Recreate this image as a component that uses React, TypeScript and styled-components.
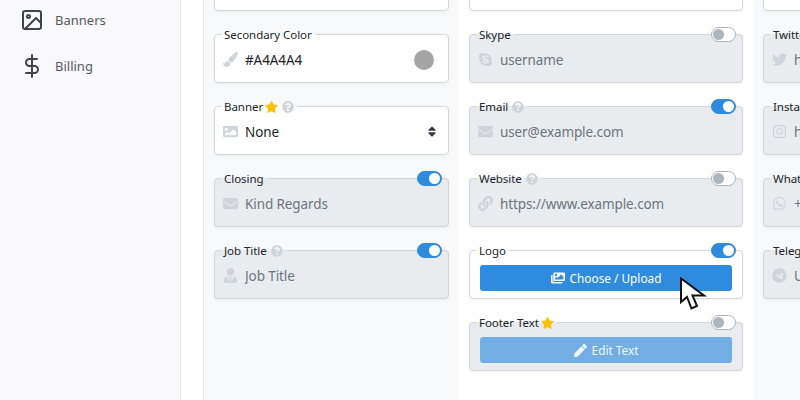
import React from "react";
import styled, { createGlobalStyle } from "styled-components";
import {
  FaPaintBrush, FaImage, FaEnvelope, FaUserTie, FaSkype, FaLink, FaImages, FaPen, FaStar,
  FaQuestionCircle, FaTwitter, FaInstagram, FaWhatsapp, FaTelegram, FaSort,
} from "react-icons/fa";
import { FiImage, FiDollarSign } from "react-icons/fi";

const Global = createGlobalStyle`
  html, body { margin: 0; padding: 0; background: #fff; }
  body { font-family: "Noto Sans", "Open Sans", "Liberation Sans", sans-serif; }
`;

const Page = styled.div`
  display: flex;
  width: 800px;
  height: 400px;
  overflow: hidden;
  background: #fff;
`;
const Sidebar = styled.nav`
  flex: 0 0 180px;
  background: #f9f9fb;
  border-right: 1px solid #dfe1e5;
  display: flex;
  flex-direction: column;
`;
const NavList = styled.div`
  margin-top: -3px;
  padding-left: 20px;
  display: flex;
  flex-direction: column;
`;
const NavItem = styled.div`
  height: 46px;
  display: flex;
  align-items: center;
  gap: 11px;
  font-size: 13px;
  color: #55595f;
  svg { flex: 0 0 24px; color: #404348; }
`;
const Gutter = styled.div`
  flex: 0 0 22px;
  border-right: 1px solid #dfe1e5;
`;
const Column = styled.section<{ $w: number; $shade?: boolean }>`
  flex: 0 0 ${(p) => p.$w}px;
  padding: 0 10px;
  box-sizing: border-box;
  height: 400px;
  background: ${(p) => (p.$shade ? "#f8f9fb" : "#fff")};
`;
const Stack = styled.div`
  margin-top: -46px;
  display: flex;
  flex-direction: column;
  gap: 15px;
`;
const Card = styled.fieldset<{ $off?: boolean }>`
  position: relative;
  margin: 0;
  padding: 0;
  min-width: 0;
  border: 1px solid #d3d6da;
  border-radius: 4px;
  background: ${(p) => (p.$off ? "#e9ecef" : "#fff")};
  box-shadow: 0 1px 3px rgba(0, 0, 0, 0.06);
`;
const Legend = styled.legend`
  margin-left: 6px;
  padding: 0 3px;
  height: 17px;
  line-height: 17px;
  font-size: 11.5px;
  letter-spacing: -0.05px;
  color: #212529;
  display: flex;
  align-items: center;
  gap: 4px;
  white-space: nowrap;
`;
const Help = styled(FaQuestionCircle)`
  color: #ced4da;
  width: 12px;
  height: 12px;
`;
const Star = styled(FaStar)`
  color: #ffc107;
  width: 13px;
  height: 12px;
  margin-left: -2px;
`;
const Toggle = styled.span<{ $on?: boolean }>`
  position: absolute;
  top: -16px;
  right: 6px;
  width: 25px;
  height: 15px;
  box-sizing: border-box;
  border-radius: 8px;
  background: ${(p) => (p.$on ? "#2f8bdd" : "#fff")};
  border: 1px solid ${(p) => (p.$on ? "#2f8bdd" : "#adb5bd")};
  &::after {
    content: "";
    position: absolute;
    top: 1px;
    left: ${(p) => (p.$on ? "11px" : "1px")};
    width: 11px;
    height: 11px;
    border-radius: 50%;
    background: ${(p) => (p.$on ? "#fff" : "#adb5bd")};
  }
`;
const Row = styled.div`
  padding: 0 9px 6px 8px;
  height: 33px;
  display: flex;
  align-items: center;
  gap: 7px;
`;
const FieldIcon = styled.span`
  flex: 0 0 15px;
  display: flex;
  justify-content: center;
  color: #ced4da;
  font-size: 15px;
`;
const Value = styled.span<{ $off?: boolean }>`
  flex: 1;
  font-size: 13.5px;
  letter-spacing: -0.1px;
  color: ${(p) => (p.$off ? "#6c757d" : "#212529")};
  white-space: nowrap;
  overflow: hidden;
`;
const Swatch = styled.span`
  width: 20px;
  height: 20px;
  border-radius: 50%;
  background: #a4a4a4;
  margin-right: 5px;
`;
const SortIcon = styled(FaSort)`
  color: #343a40;
  width: 10px;
  height: 13px;
  margin-right: 2px;
`;
const ButtonWrap = styled.div`
  padding: 6px 10px 7px;
`;
const Action = styled.div<{ $off?: boolean }>`
  height: 26px;
  border-radius: 3px;
  background: ${(p) => (p.$off ? "#72aee3" : "#2f8bdd")};
  color: ${(p) => (p.$off ? "#eef5fc" : "#fff")};
  font-size: 11.8px;
  display: flex;
  align-items: center;
  justify-content: center;
  gap: 5px;
`;
const Cursor = styled.svg`
  position: absolute;
  left: 679px;
  top: 277px;
`;

type FieldProps = {
  label: string;
  icon: React.ReactNode;
  value: string;
  on?: boolean;
  off?: boolean;
  help?: boolean;
};

const Field = ({ label, icon, value, on, off, help }: FieldProps) => (
  <Card $off={off}>
    <Legend>
      {label}
      {help && <Help />}
    </Legend>
    {(on || off) && <Toggle $on={on} />}
    <Row>
      <FieldIcon>{icon}</FieldIcon>
      <Value $off={off}>{value}</Value>
    </Row>
  </Card>
);

export default function App() {
  return (
    <Page>
      <Global />
      <Sidebar>
        <NavList>
          <NavItem><FiImage size={24} />Banners</NavItem>
          <NavItem><FiDollarSign size={24} />Billing</NavItem>
        </NavList>
      </Sidebar>
      <Gutter />
      <Column $w={255} $shade>
        <Stack>
          <Field label="Primary Color" icon={<FaPaintBrush />} value="#2E8BDC" />
          <Card>
            <Legend>Secondary Color</Legend>
            <Row>
              <FieldIcon><FaPaintBrush /></FieldIcon>
              <Value>#A4A4A4</Value>
              <Swatch />
            </Row>
          </Card>
          <Card>
            <Legend>Banner <Star /><Help /></Legend>
            <Row>
              <FieldIcon><FaImage /></FieldIcon>
              <Value>None</Value>
              <SortIcon />
            </Row>
          </Card>
          <Field label="Closing" icon={<FaEnvelope />} value="Kind Regards" on off />
          <Field label="Job Title" help icon={<FaUserTie />} value="Job Title" on off />
        </Stack>
      </Column>
      <Column $w={294}>
        <Stack>
          <Field label="Phone" icon={<FaLink />} value="" />
          <Field label="Skype" icon={<FaSkype />} value="username" off />
          <Field label="Email" help icon={<FaEnvelope />} value="user@example.com" on off />
          <Field label="Website" help icon={<FaLink />} value="https://www.example.com" off />
          <Card>
            <Legend>Logo</Legend>
            <Toggle $on />
            <ButtonWrap>
              <Action><FaImages size={14} />Choose / Upload</Action>
            </ButtonWrap>
          </Card>
          <Card $off>
            <Legend>Footer Text <Star /></Legend>
            <Toggle />
            <ButtonWrap>
              <Action $off><FaPen size={13} />Edit Text</Action>
            </ButtonWrap>
          </Card>
        </Stack>
      </Column>
      <Column $w={294} $shade>
        <Stack>
          <Field label="Facebook" icon={<FaLink />} value="" />
          <Field label="Twitter" icon={<FaTwitter />} value="https://twitter.com" off />
          <Field label="Instagram" icon={<FaInstagram />} value="https://instagram.com" off />
          <Field label="WhatsApp" icon={<FaWhatsapp />} value="+1 555 0100" off />
          <Field label="Telegram" icon={<FaTelegram />} value="Username" off />
        </Stack>
      </Column>
      <Cursor width="28" height="34" viewBox="0 0 28 34">
        <path d="M2 1.5 L2 25 L8 20 L12.5 31.5 L18 29 L13.5 18.5 L25 18.5 Z" fill="#fff" stroke="#111" strokeWidth="2" strokeLinejoin="miter" />
      </Cursor>
    </Page>
  );
}
